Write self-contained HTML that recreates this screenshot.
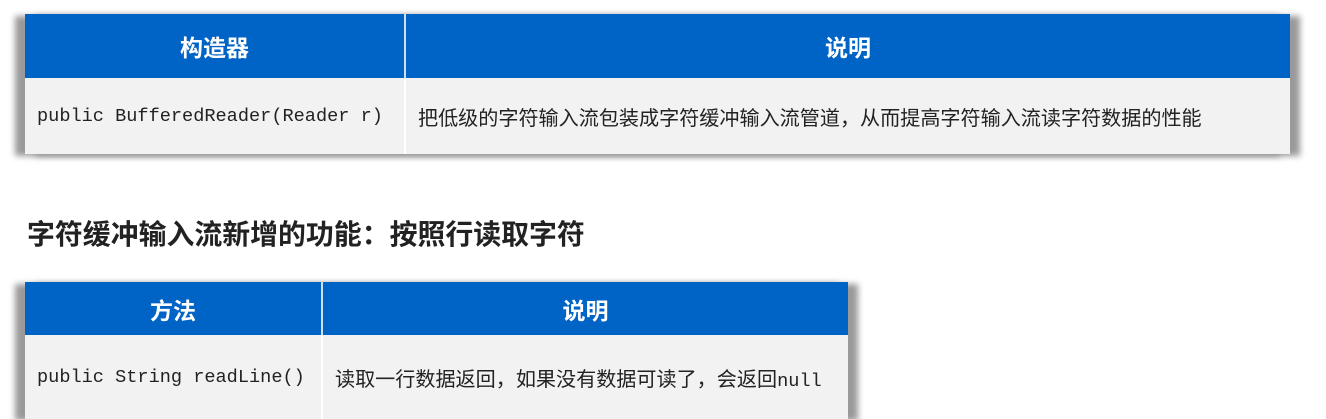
<!DOCTYPE html>
<html><head><meta charset="utf-8"><style>
body{margin:0;width:1326px;height:413px;background:#fff;position:relative;overflow:hidden;font-family:"Liberation Sans","Noto Sans CJK SC",sans-serif}
.t{position:absolute;border-collapse:collapse;box-shadow:-10px 2px 6px #999,10px 2px 6px #999}
.t th{background:#0063c6;color:#fff;font-size:23px;font-weight:bold;border-right:2px solid #cfe0f3;padding:0}
.t th:last-child{border-right:none}
.t td{background:#f2f2f2;color:#222;font-size:20.1px;padding:0 0 0 12px;border-right:2px solid #fff;white-space:nowrap}
.t td:last-child{border-right:none}
.m{font-family:"Liberation Mono",monospace;font-size:18.6px!important}
.n{font-family:"Liberation Mono",monospace;font-size:18.6px}
h2{position:absolute;left:27px;top:213px;margin:0;font-size:27.9px;font-weight:bold;color:#222;white-space:nowrap}
</style></head><body>
<table class="t" style="left:25px;top:14px;width:1265px">
<tr style="height:64px"><th style="width:379px">构造器</th><th>说明</th></tr>
<tr style="height:76px"><td class="m">public BufferedReader(Reader r)</td><td>把低级的字符输入流包装成字符缓冲输入流管道，从而提高字符输入流读字符数据的性能</td></tr>
</table>
<h2>字符缓冲输入流新增的功能：按照行读取字符</h2>
<table class="t" style="left:25px;top:282px;width:823px">
<tr style="height:53px"><th style="width:296px">方法</th><th>说明</th></tr>
<tr style="height:84px"><td class="m">public String readLine()</td><td>读取一行数据返回，如果没有数据可读了，会返回<span class="n">null</span></td></tr>
</table>
</body></html>
